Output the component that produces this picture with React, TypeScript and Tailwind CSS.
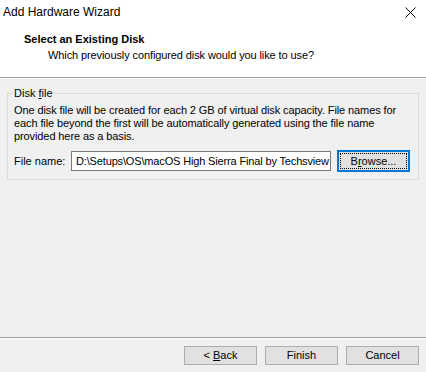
export default function App() {
  return (
    <div className="flex h-[372px] w-[426px] flex-col bg-[#f0f0f0] font-['Liberation_Sans',Arial,sans-serif] text-[11px] leading-[13px] text-black">
      {/* title bar + wizard header */}
      <div className="h-[77px] bg-white">
        <div className="flex h-[25px] items-center justify-between pl-[3px] pr-[10px]">
          <span className="text-[12px]">Add Hardware Wizard</span>
          <svg width="11" height="11" viewBox="0 0 11 11" className="stroke-black">
            <path d="M0.5 0.5L10.5 10.5M10.5 0.5L0.5 10.5" strokeWidth="1" />
          </svg>
        </div>
        <div className="pl-[24px] pt-[8px] font-bold">Select an Existing Disk</div>
        <div className="pl-[48px] pt-[3px] tracking-[-0.1px]">
          Which previously configured disk would you like to use?
        </div>
      </div>
      <div className="h-px bg-[#a0a0a0]" />
      <div className="h-px bg-white" />

      <div className="px-[7px] pt-[8px]">
        <fieldset className="border border-[#dcdcdc] px-[6px] pb-[7px]">
          <legend className="-ml-px px-px">
            Disk <span className="underline">f</span>ile
          </legend>
          <p className="mt-[4px] whitespace-nowrap tracking-[-0.1px]">
            One disk file will be created for each 2 GB of virtual disk capacity. File names for
            <br />
            each file beyond the first will be automatically generated using the file name
            <br />
            provided here as a basis.
          </p>
          <div className="mt-[7px] flex items-center">
            <span className="w-[57px]">File name:</span>
            <div className="flex h-[20px] w-[260px] items-center overflow-hidden whitespace-nowrap border border-[#7a7a7a] bg-white pl-[4px] tracking-[-0.15px]">
              D:\Setups\OS\macOS High Sierra Final by Techsview
            </div>
            <button className="ml-[6px] flex h-[22px] w-[73px] items-center justify-center border-2 border-[#0078d7] bg-[#e1e1e1] p-px">
              <span className="flex h-full w-full items-center justify-center border border-dotted border-black">
                B<span className="underline">r</span>owse...
              </span>
            </button>
          </div>
        </fieldset>
      </div>

      <div className="flex-1" />
      <div className="h-px bg-[#a0a0a0]" />
      <div className="h-px bg-white" />
      <div className="flex justify-end gap-[8px] pb-[7px] pr-[7px] pt-[7px]">
        <button className="h-[19px] w-[73px] border border-[#adadad] bg-[#e1e1e1]">
          &lt; <span className="underline">B</span>ack
        </button>
        <button className="h-[19px] w-[73px] border border-[#adadad] bg-[#e1e1e1]">Finish</button>
        <button className="h-[19px] w-[73px] border border-[#adadad] bg-[#e1e1e1]">Cancel</button>
      </div>
    </div>
  );
}
